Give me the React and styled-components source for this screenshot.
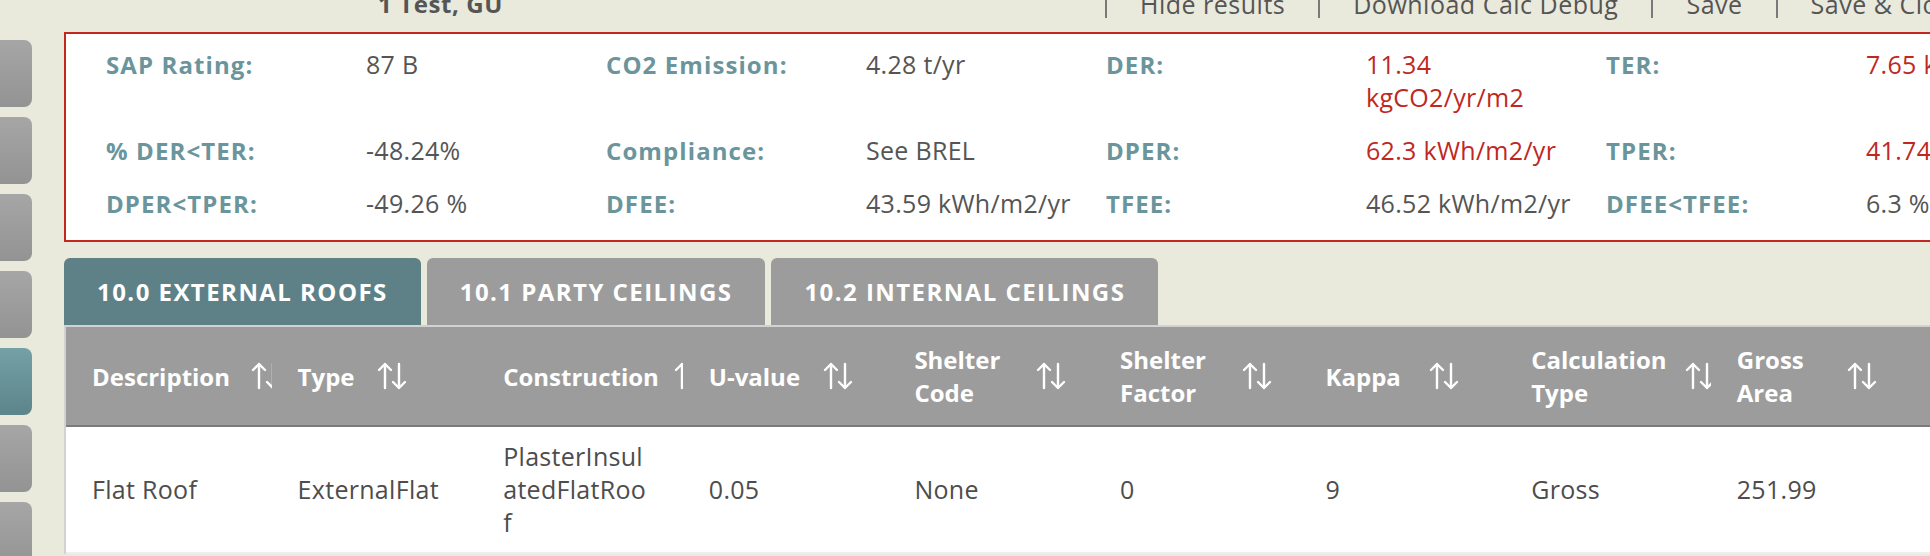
import React from 'react'
import styled, { createGlobalStyle } from 'styled-components'

const GlobalStyle = createGlobalStyle`
  html, body { margin: 0; padding: 0; }
  body {
    background: #e9e9dc;
    font-family: "Open Sans", "Noto Sans", sans-serif;
    width: 1930px;
    height: 556px;
    overflow: hidden;
  }
`

const Page = styled.div`
  display: flex;
  width: 2300px;
  height: 556px;
`

const Sidebar = styled.nav`
  flex: none;
  width: 32px;
  margin-right: 32px;
  padding-top: 40px;
  display: flex;
  flex-direction: column;
  gap: 10px;
`

const SideButton = styled.div`
  flex: none;
  width: 42px;
  height: 67px;
  margin-left: -10px;
  border-radius: 8px;
  background: ${({ $active }) => ($active ? 'linear-gradient(#74a0a6, #5c858b)' : 'linear-gradient(#a6a6a6, #939393)')};
`

const Main = styled.main`
  flex: 1;
  display: flex;
  flex-direction: column;
`

const TopBar = styled.header`
  display: flex;
  height: 40px;
  margin-top: -8px;
  font-size: 25px;
  line-height: 24px;
  letter-spacing: 0.5px;
  color: #555;
`

const Title = styled.div`
  width: 1041px;
  padding-left: 314px;
  box-sizing: border-box;
  font-weight: 700;
  font-size: 24px;
  letter-spacing: 0.6px;
`

const Links = styled.div`
  display: flex;
`

const LinkItem = styled.a`
  height: 26px;
  padding: 0 33px;
  border-left: 2px solid #7a7a7a;
  color: #555;
  text-decoration: none;
  white-space: nowrap;
`

const Results = styled.section`
  display: grid;
  grid-template-columns: repeat(3, 260px 240px) 260px 400px;
  row-gap: 20px;
  padding: 14px 0 20px 40px;
  border: 2px solid #c1281e;
  border-right: none;
  background: #fff;
  font-size: 25px;
  line-height: 33px;
`

const Label = styled.div`
  font-weight: 700;
  font-size: 24px;
  letter-spacing: 1.1px;
  color: #6a959c;
`

const Value = styled.div`
  padding-right: 25px;
  letter-spacing: 0.3px;
  color: ${({ $alert }) => ($alert ? '#c0281f' : '#555')};
`

const Tabs = styled.div`
  display: flex;
  gap: 6px;
  margin-top: 16px;
`

const Tab = styled.button`
  height: 67px;
  padding: 0 33px;
  border: none;
  border-radius: 6px 6px 0 0;
  background: ${({ $active }) => ($active ? '#5e8187' : '#9c9c9c')};
  color: #fff;
  font: 700 24px/1 "Open Sans", sans-serif;
  letter-spacing: 1.45px;
  text-transform: uppercase;
  white-space: nowrap;
`

const Table = styled.div`
  border-top: 2px solid #d2d2d2;
  border-left: 2px solid #d2d2d2;
  background: #fff;
`

const HeadRow = styled.div`
  display: grid;
  grid-template-columns: repeat(10, 205.6px);
  height: 98px;
  background: #9c9c9c;
  border-bottom: 2px solid #7b7b7b;
`

const HeadCell = styled.div`
  display: flex;
  align-items: center;
  padding-left: 26px;
  overflow: hidden;
  color: #fff;
  font-weight: 700;
  font-size: 24px;
  line-height: 33px;
`

const HeadLabel = styled.span`
  flex: none;
  width: ${({ $w }) => $w}px;
`

const BodyRow = styled.div`
  display: grid;
  grid-template-columns: repeat(10, 205.6px);
  height: 125px;
  border-bottom: 2px solid #eeeeee;
`

const BodyCell = styled.div`
  display: flex;
  align-items: center;
  padding-left: 26px;
  color: #4d4d4d;
  font-size: 25px;
  letter-spacing: 0.3px;
  line-height: 33px;
`

const Wrap = styled.span`
  width: 150px;
  word-break: break-all;
`

const SortIcon = () => (
  <svg width="32" height="32" viewBox="0 0 32 32" fill="none" stroke="#fff" strokeWidth="2.4" strokeLinecap="round" strokeLinejoin="round" style={{ flex: 'none' }}>
    <path d="M9 28V4M3 10l6-6 6 6" />
    <path d="M23 4v24M17 22l6 6 6-6" />
  </svg>
)

const results = [
  ['SAP Rating:', '87 B', 'CO2 Emission:', '4.28 t/yr', 'DER:', '11.34 kgCO2/yr/m2', 'TER:', '7.65 kgCO2/yr/m2'],
  ['% DER<TER:', '-48.24%', 'Compliance:', 'See BREL', 'DPER:', '62.3 kWh/m2/yr', 'TPER:', '41.74 kWh/m2/yr'],
  ['DPER<TPER:', '-49.26 %', 'DFEE:', '43.59 kWh/m2/yr', 'TFEE:', '46.52 kWh/m2/yr', 'DFEE<TFEE:', '6.3 %'],
]
const alertValues = ['11.34 kgCO2/yr/m2', '7.65 kgCO2/yr/m2', '62.3 kWh/m2/yr', '41.74 kWh/m2/yr']

const columns = [
  { label: 'Description', w: 158 },
  { label: 'Type', w: 78 },
  { label: 'Construction', w: 170 },
  { label: 'U-value', w: 113 },
  { label: <>Shelter<br />Code</>, w: 121 },
  { label: <>Shelter<br />Factor</>, w: 121 },
  { label: 'Kappa', w: 102 },
  { label: <>Calculation<br />Type</>, w: 153 },
  { label: <>Gross<br />Area</>, w: 109 },
  { label: <>Net<br />Area</>, w: 109 },
]

const row = ['Flat Roof', 'ExternalFlat', 'PlasterInsulatedFlatRoof', '0.05', 'None', '0', '9', 'Gross', '251.99', '']

export default function App() {
  return (
    <>
      <GlobalStyle />
      <Page>
        <Sidebar>
          {[0, 1, 2, 3, 4, 5, 6].map((i) => (
            <SideButton key={i} $active={i === 4} />
          ))}
        </Sidebar>
        <Main>
          <TopBar>
            <Title>1 Test, GU</Title>
            <Links>
              <LinkItem>Hide results</LinkItem>
              <LinkItem>Download Calc Debug</LinkItem>
              <LinkItem>Save</LinkItem>
              <LinkItem>Save &amp; Close</LinkItem>
            </Links>
          </TopBar>
          <Results>
            {results.flat().map((text, i) =>
              i % 2 === 0 ? (
                <Label key={i}>{text}</Label>
              ) : (
                <Value key={i} $alert={alertValues.includes(text)}>{text}</Value>
              )
            )}
          </Results>
          <Tabs>
            <Tab $active>10.0 External Roofs</Tab>
            <Tab>10.1 Party Ceilings</Tab>
            <Tab>10.2 Internal Ceilings</Tab>
          </Tabs>
          <Table>
            <HeadRow>
              {columns.map((c, i) => (
                <HeadCell key={i}>
                  <HeadLabel $w={c.w}>{c.label}</HeadLabel>
                  <SortIcon />
                </HeadCell>
              ))}
            </HeadRow>
            <BodyRow>
              {row.map((v, i) => (
                <BodyCell key={i}>{i === 2 ? <Wrap>{v}</Wrap> : v}</BodyCell>
              ))}
            </BodyRow>
          </Table>
        </Main>
      </Page>
    </>
  )
}
